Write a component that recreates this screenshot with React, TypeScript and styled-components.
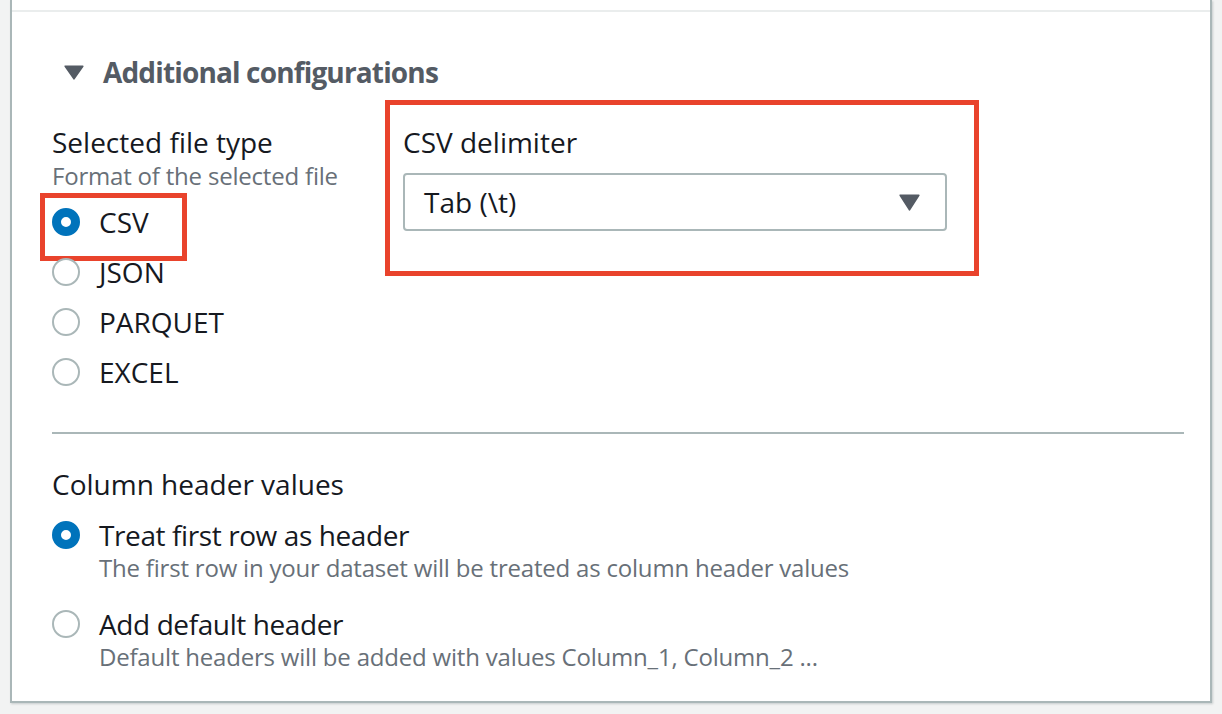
import React from "react";
import styled, { createGlobalStyle } from "styled-components";

const GlobalStyle = createGlobalStyle`
  html, body {
    margin: 0;
    padding: 0;
    background: #f2f3f3;
  }
  body {
    font-family: "Open Sans", "Noto Sans", sans-serif;
    color: #16191f;
    -webkit-font-smoothing: antialiased;
  }
  * { box-sizing: border-box; }
`;

const Page = styled.div`
  width: 1222px;
  height: 714px;
  padding: 0 10px;
  background: #f2f3f3;
  overflow: hidden;
`;

const Panel = styled.section`
  height: 703px;
  background: #ffffff;
  border: 2px solid #aab7b8;
  border-top: none;
  box-shadow: 1px 1px 2px rgba(0, 28, 36, 0.18);
  padding-top: 10px;
`;

const TopRule = styled.div`
  height: 2px;
  background: #eaeded;
`;

const Content = styled.div`
  padding: 40px 26px 0 40px;
`;

const ExpandHeader = styled.div`
  display: flex;
  align-items: center;
  gap: 19px;
  height: 40px;
  margin-left: 12px;
  color: #545b64;
  font-size: 28px;
  font-weight: 700;
  letter-spacing: -0.85px;
`;

const FileRow = styled.div`
  display: grid;
  grid-template-columns: 351px 544px;
  align-items: start;
  margin-top: 32px;
`;

const Column = styled.div`
  display: flex;
  flex-direction: column;
`;

const FieldLabel = styled.div`
  font-size: 28px;
  line-height: 36px;
  color: #16191f;
`;

const FieldDesc = styled.div`
  font-size: 24px;
  line-height: 32px;
  color: #687078;
  letter-spacing: -0.2px;
`;

const RadioList = styled.div`
  display: flex;
  flex-direction: column;
  margin-top: 5px;
`;

const RadioRow = styled.div`
  position: relative;
  display: flex;
  align-items: center;
  gap: 19px;
  height: 50px;
  font-size: 28px;
  color: #16191f;
`;

const RadioCircle = styled.span<{ $checked?: boolean }>`
  flex: none;
  width: 28px;
  height: 28px;
  border-radius: 50%;
  background: #ffffff;
  border: ${(p) => (p.$checked ? "9px solid #0073bb" : "2.5px solid #aab7b8")};
`;

const Highlight = styled.div<{ $top: number; $left: number; $right?: number; $bottom: number; $width?: number }>`
  position: absolute;
  top: ${(p) => p.$top}px;
  left: ${(p) => p.$left}px;
  bottom: ${(p) => p.$bottom}px;
  ${(p) => (p.$width !== undefined ? `width: ${p.$width}px;` : `right: ${p.$right}px;`)}
  border: 5px solid #e9432c;
  pointer-events: none;
`;

const DelimiterField = styled.div`
  position: relative;
  display: flex;
  flex-direction: column;
`;

const SelectBox = styled.div`
  display: flex;
  align-items: center;
  justify-content: space-between;
  height: 58px;
  margin-top: 13px;
  padding: 0 25px 0 19px;
  border: 2px solid #aab7b8;
  border-radius: 4px;
  font-size: 28px;
  color: #16191f;
  background: #ffffff;
`;

const Divider = styled.div`
  height: 2px;
  background: #aab7b8;
  margin-top: 35px;
`;

const HeaderSection = styled.div`
  margin-top: 32px;
  display: flex;
  flex-direction: column;
`;

const OptionList = styled.div`
  display: flex;
  flex-direction: column;
  gap: 23px;
  margin-top: 16px;
`;

const Option = styled.div`
  display: grid;
  grid-template-columns: 28px 1fr;
  column-gap: 19px;
`;

const RadioCell = styled.div`
  height: 34px;
  display: flex;
  align-items: center;
`;

const OptionText = styled.div`
  display: flex;
  flex-direction: column;
`;

const OptionLabel = styled.div`
  font-size: 28px;
  line-height: 34px;
  color: #16191f;
  letter-spacing: -0.4px;
`;

const Caret = ({ w, h }: { w: number; h: number }) => (
  <svg width={w} height={h} viewBox={`0 0 ${w} ${h}`} aria-hidden="true">
    <path
      d={`M1.2 1.2 L${w - 1.2} 1.2 L${w / 2} ${h - 1.2} Z`}
      fill="#545b64"
      stroke="#545b64"
      strokeWidth="1.6"
      strokeLinejoin="round"
    />
  </svg>
);

const fileTypes = ["CSV", "JSON", "PARQUET", "EXCEL"];

export default function App() {
  return (
    <>
      <GlobalStyle />
      <Page>
        <Panel>
          <TopRule />
          <Content>
            <ExpandHeader>
              <Caret w={20} h={15} />
              <span>Additional configurations</span>
            </ExpandHeader>

            <FileRow>
              <Column>
                <FieldLabel>Selected file type</FieldLabel>
                <FieldDesc>Format of the selected file</FieldDesc>
                <RadioList>
                  {fileTypes.map((t, i) => (
                    <RadioRow key={t}>
                      <RadioCircle $checked={i === 0} />
                      <span>{t}</span>
                      {i === 0 && <Highlight $top={-4} $left={-12} $bottom={-14} $width={147} />}
                    </RadioRow>
                  ))}
                </RadioList>
              </Column>

              <DelimiterField>
                <FieldLabel>CSV delimiter</FieldLabel>
                <SelectBox>
                  <span>Tab (\t)</span>
                  <Caret w={21} h={17} />
                </SelectBox>
                <Highlight $top={-24} $left={-18} $right={-32} $bottom={-45} />
              </DelimiterField>
            </FileRow>

            <Divider />

            <HeaderSection>
              <FieldLabel>Column header values</FieldLabel>
              <OptionList>
                <Option>
                  <RadioCell>
                    <RadioCircle $checked />
                  </RadioCell>
                  <OptionText>
                    <OptionLabel>Treat first row as header</OptionLabel>
                    <FieldDesc>The first row in your dataset will be treated as column header values</FieldDesc>
                  </OptionText>
                </Option>
                <Option>
                  <RadioCell>
                    <RadioCircle />
                  </RadioCell>
                  <OptionText>
                    <OptionLabel>Add default header</OptionLabel>
                    <FieldDesc>Default headers will be added with values Column_1, Column_2 ...</FieldDesc>
                  </OptionText>
                </Option>
              </OptionList>
            </HeaderSection>
          </Content>
        </Panel>
      </Page>
    </>
  );
}
